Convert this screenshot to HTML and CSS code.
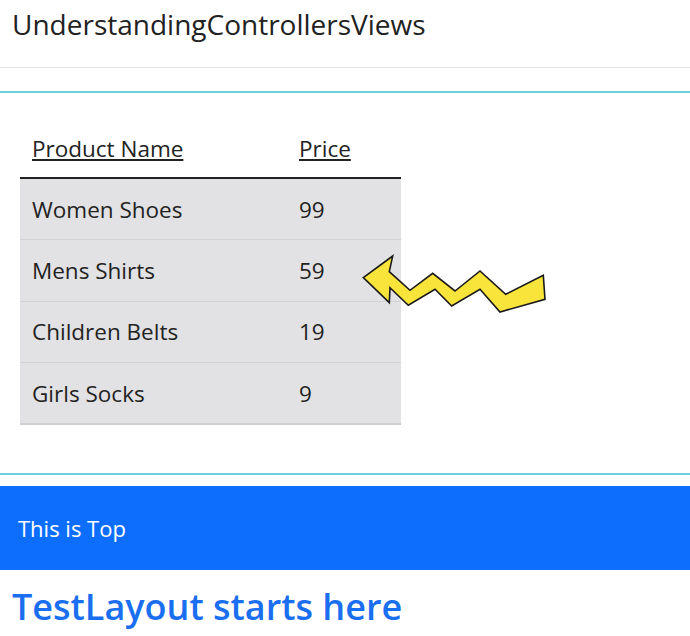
FILE: index.html
```html
<!DOCTYPE html>
<html>
<head>
<meta charset="utf-8">
<link rel="stylesheet" href="styles.css">
</head>
<body>
<header class="topbar">
  <span class="brand">UnderstandingControllersViews</span>
</header>
<main class="content">
  <hr class="rule">
  <div class="table-wrap">
    <table class="products">
      <thead>
        <tr><th><u>Product Name</u></th><th><u>Price</u></th></tr>
      </thead>
      <tbody>
        <tr><td>Women Shoes</td><td>99</td></tr>
        <tr><td>Mens Shirts</td><td>59</td></tr>
        <tr><td>Children Belts</td><td>19</td></tr>
        <tr><td>Girls Socks</td><td>9</td></tr>
      </tbody>
    </table>
    <svg class="arrow" width="200" height="70" viewBox="355 250 200 70">
      <polygon points="363.3,276.7 392.7,255 389.3,270.7 410,289.3 432.7,272.3 455,290 480,270 505.7,293.3 543.3,274.3 545,298.3 500,311 480,288.3 451.7,305 435,288.3 408.3,304.3 390,286.7 389.3,301.7" fill="#f8e43a" stroke="#1a1a1a" stroke-width="1.6" stroke-linejoin="miter"/>
    </svg>
  </div>
  <hr class="rule rule-bottom">
  <div class="topband">This is Top</div>
  <h1 class="layout-title">TestLayout starts here</h1>
</main>
</body>
</html>
```
FILE: styles.css
```css
* { box-sizing: border-box; }
html, body { margin: 0; padding: 0; background: #fff; }
body {
  font-family: "Open Sans", "Noto Sans", sans-serif;
  color: #212529;
  width: 690px;
  height: 636px;
  overflow: hidden;
}
.topbar {
  height: 68px;
  border-bottom: 1px solid #e3e3e3;
  display: flex;
  align-items: center;
  padding: 0 12px 20px;
}
.brand {
  font-size: 28px;
  color: #222;
}
.rule {
  margin: 23px 0 0;
  border: 0;
  border-top: 2px solid #6ccfe0;
  height: 0;
}
.table-wrap {
  position: relative;
  padding: 32px 20px 48px;
}
.products {
  border-collapse: collapse;
  width: 381px;
  font-size: 22.5px;
}
.products th {
  text-align: left;
  font-weight: 400;
  padding: 8px 12px 13px;
  border-bottom: 2px solid #222;
  color: #222;
}
.products th:first-child { width: 267px; }
.products td {
  background: #e2e2e4;
  padding: 12px 12px;
  height: 61.5px;
  border-bottom: 1px solid #d2d2d4;
  color: #222;
}
.products tr:last-child td { border-bottom: 2px solid #cfcfd1; }
.arrow {
  position: absolute;
  left: 355px;
  top: 158px;
}
.rule-bottom { margin: 0; }
.topband {
  margin-top: 11px;
  background: #0d6efd;
  color: #fff;
  height: 84px;
  display: flex;
  align-items: center;
  padding: 0 18px;
  font-size: 22px;
}
.layout-title {
  margin: 15px 0 0;
  padding: 0 12px;
  font-size: 36px;
  font-weight: 600;
  color: #1a6ef0;
  line-height: 1.2;
}
```
